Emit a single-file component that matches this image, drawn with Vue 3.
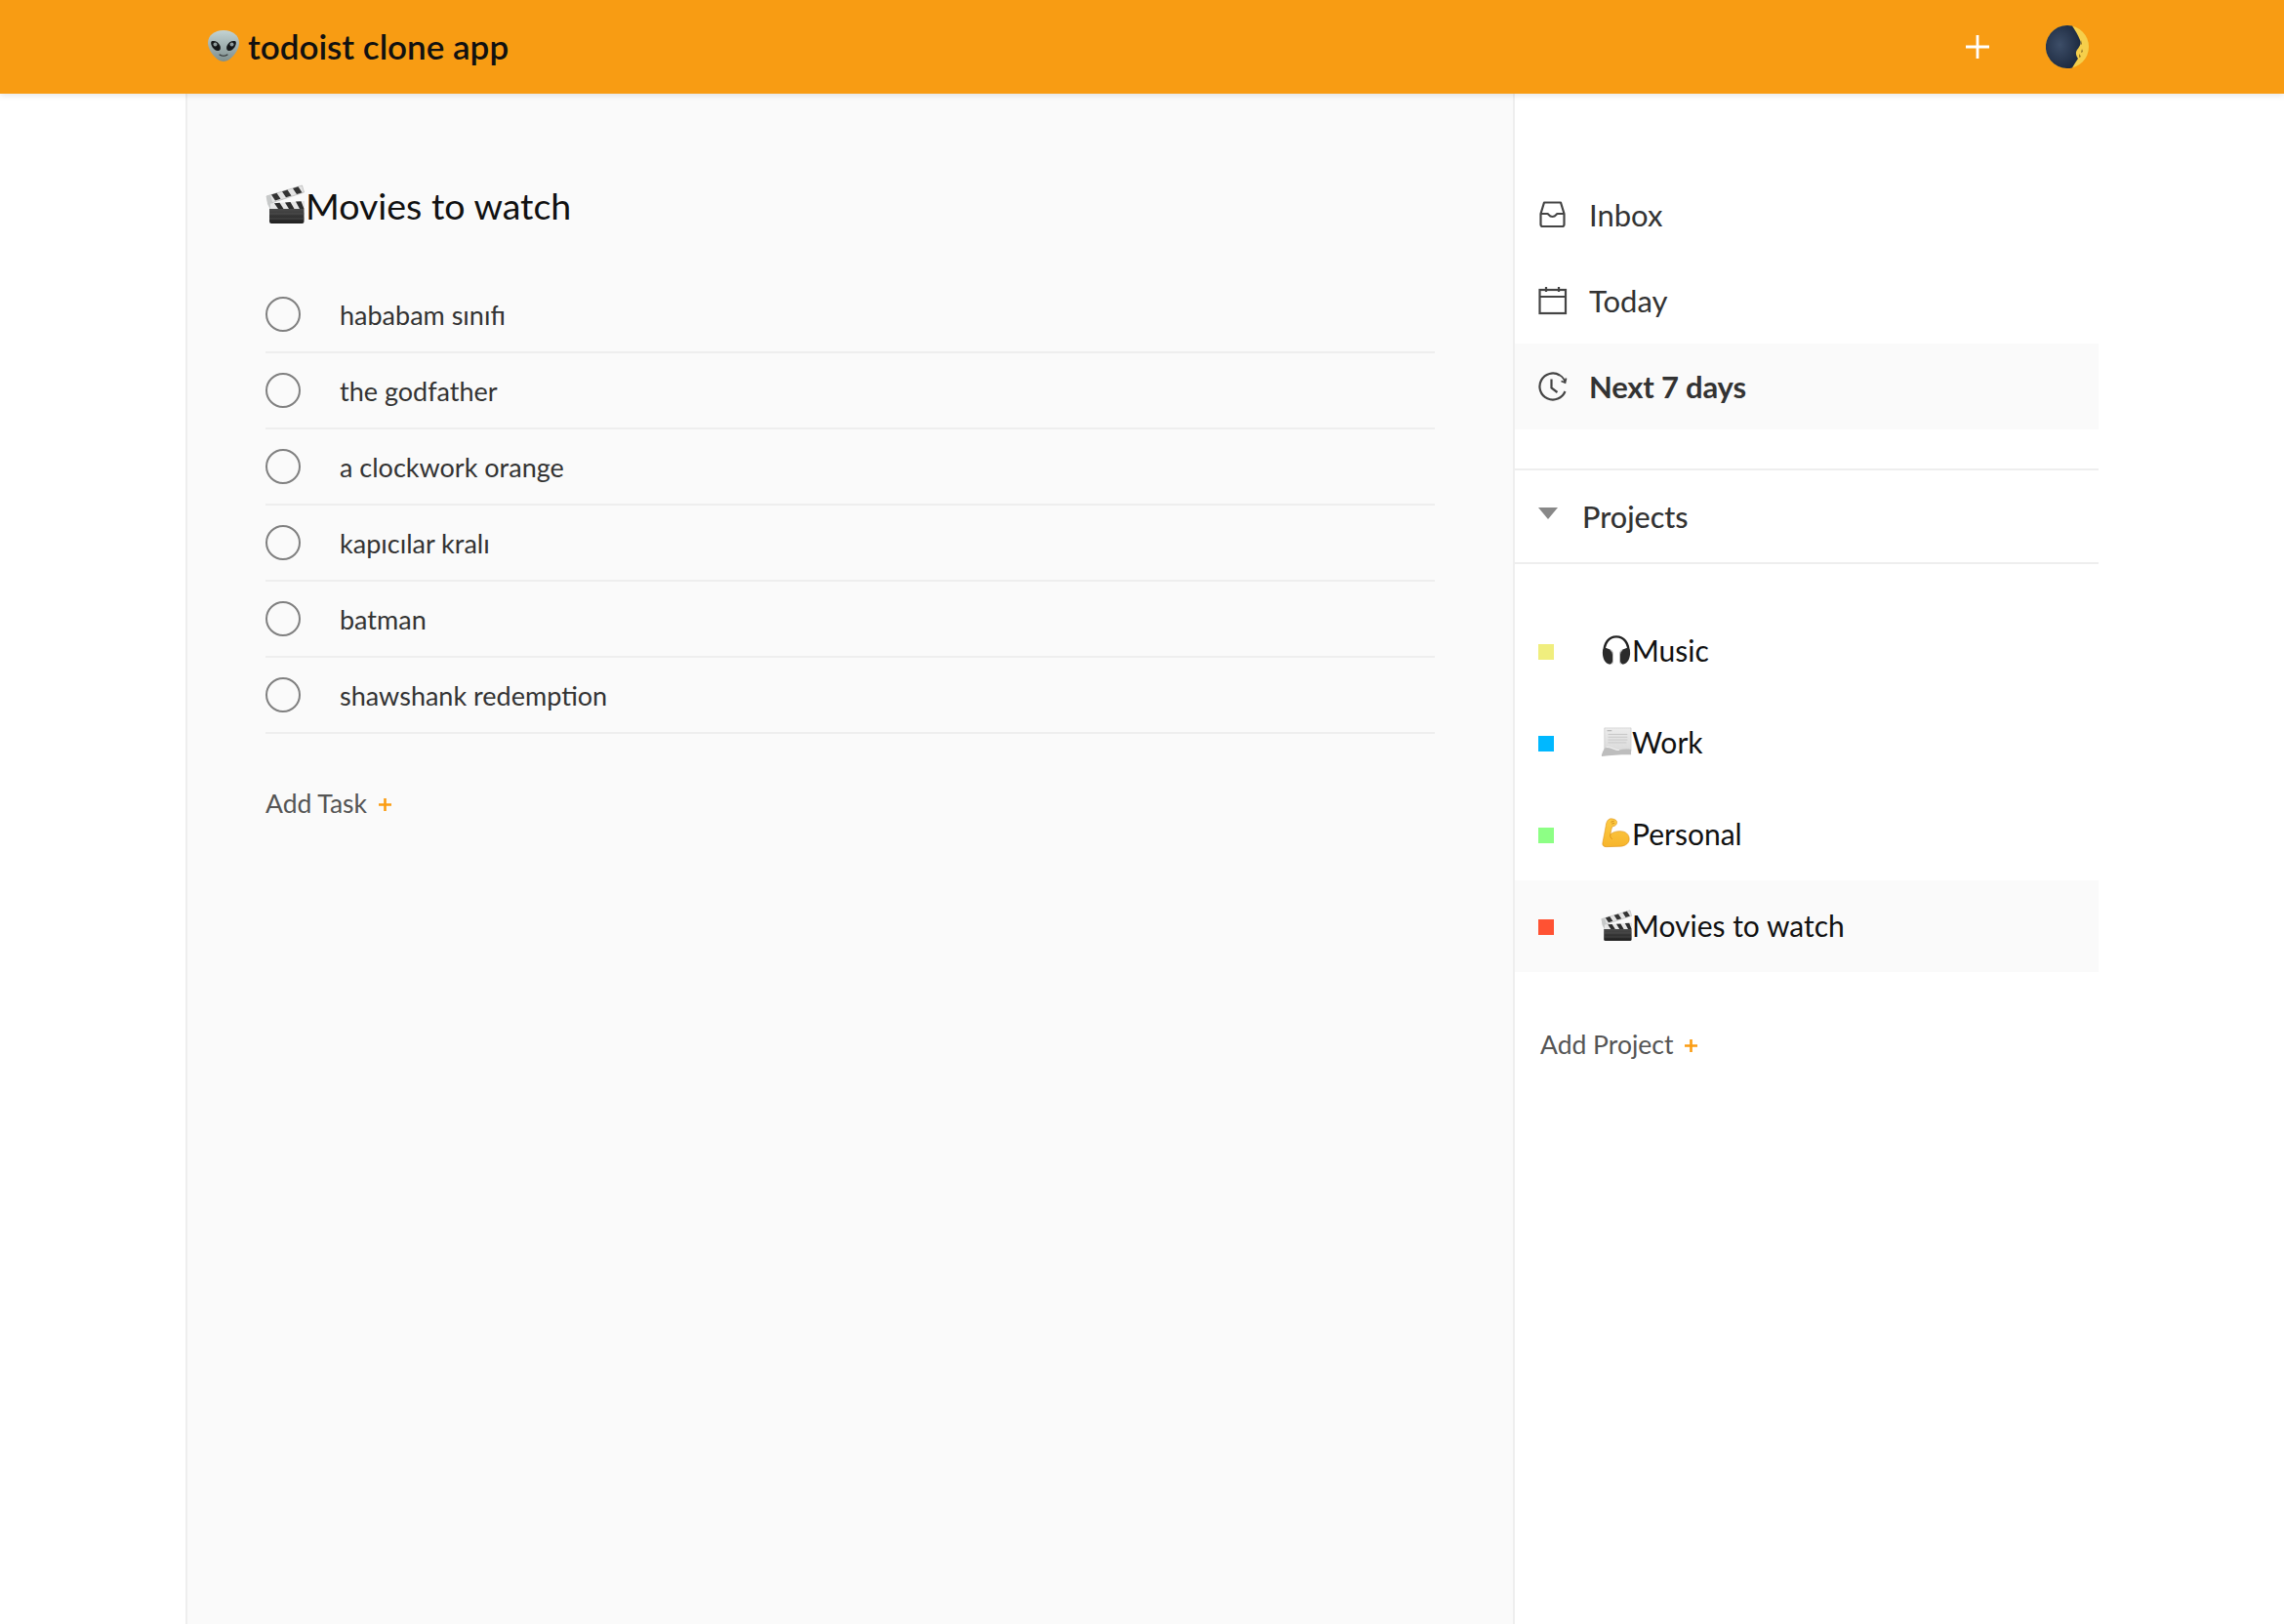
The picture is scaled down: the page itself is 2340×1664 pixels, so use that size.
<template>
  <div class="app">
    <svg class="sprites" width="0" height="0" aria-hidden="true">
      <defs>
        <linearGradient id="board" x1="0" y1="0" x2="0" y2="1">
          <stop offset="0" stop-color="#4a4a4a" />
          <stop offset="1" stop-color="#1f1f1f" />
        </linearGradient>
        <linearGradient id="alienSkin" x1="0" y1="0" x2="0" y2="1">
          <stop offset="0" stop-color="#c3d3d3" />
          <stop offset="1" stop-color="#7f8f8e" />
        </linearGradient>
        <linearGradient id="arm" x1="0" y1="0" x2="0" y2="1">
          <stop offset="0" stop-color="#fdcb45" />
          <stop offset="1" stop-color="#f7b52c" />
        </linearGradient>
        <linearGradient id="paper" x1="0" y1="0" x2="0" y2="1">
          <stop offset="0" stop-color="#ececec" />
          <stop offset="1" stop-color="#d8d8d8" />
        </linearGradient>
        <radialGradient id="moonDark" cx="0.4" cy="0.45" r="0.6">
          <stop offset="0" stop-color="#3d4e68" />
          <stop offset="1" stop-color="#1d2a40" />
        </radialGradient>
      </defs>
      <symbol id="e-clapper" viewBox="0 0 40 40">
        <path d="M1 12 37.500 1l2 7L3 20z" fill="#e4e4e4" stroke="#9a9a9a" stroke-width=".5" />
        <path d="M6 10.500l5.500-1.700 4 6-5.500 1.700zM17 7.200l5.500-1.700 4 6-5.500 1.700zM28 3.900l5.500-1.700 4 6-5.500 1.700z" fill="#333" />
        <path d="M1 12l4-1 4 13-4 2-3-6z" fill="#c7c9c9" />
        <path d="M5 19.500 40 17v8H5z" fill="#e6e6e6" />
        <path d="M9 19.200l5.500-.4 4 6.200H13zM20 18.400l5.500-.4 4 7H24zM31 17.600l5.500-.4 3 7.800H35z" fill="#2c2c2c" />
        <path d="M4 25h35.500v13a2 2 0 0 1-2 2H6a2 2 0 0 1-2-2z" fill="url(#board)" />
        <path d="M4 30h35.500M4 35h35.500" stroke="#5a5a5a" stroke-width=".7" />
      </symbol>
      <symbol id="e-phones" viewBox="0 0 34 34">
        <path d="M3.500 21C3.500 9 9 2.500 17 2.500S30.500 9 30.500 21" fill="none" stroke="#222" stroke-width="2.600" />
        <path d="M2 20c0-4 2-6 4-5l4 1.500c2 .8 3 2.500 3 5v7c0 3-2 4.500-4 4-4-.8-7-6-7-12.500z" fill="#2b2b2b" />
        <path d="M32 20c0-4-2-6-4-5l-4 1.500c-2 .8-3 2.500-3 5v7c0 3 2 4.500 4 4 4-.8 7-6 7-12.500z" fill="#2b2b2b" />
        <path d="M10.500 17c2 1 2.800 3 2.800 5v7c0 1.500-.6 2.500-1.500 3.200M23.500 17c-2 1-2.800 3-2.800 5v7c0 1.500.6 2.500 1.500 3.200" fill="none" stroke="#bdbdbd" stroke-width="1.100" />
      </symbol>
      <symbol id="e-scroll" viewBox="0 0 34 34">
        <path d="M4 2h29v25c-9 0-20 1-29 3z" fill="url(#paper)" stroke="#c4c4c4" stroke-width=".6" />
        <path d="M8 9h21M8 12h21M8 15h21M8 18h20" stroke="#c6c6c6" stroke-width="1" />
        <path d="M7 5h5" stroke="#aaa" stroke-width="1" />
        <path d="M1 31c1-2 2-7 5-8 6-1 10 4 14 3 4-.8 8-1.500 13-.5v5.500c-10-.2-21 .500-32 2z" fill="#bdbdbd" />
        <path d="M6 23c6-1 10 4 14 3" fill="none" stroke="#f2f2f2" stroke-width="1.200" />
      </symbol>
      <symbol id="e-arm" viewBox="0 0 34 34">
        <path d="M10 1C13 .5 17 2 17.500 4 18 7 16 9 12.500 9.500 11.500 12 11 15 10.500 18 13 15.500 17 14.500 21 14.500 27 14.500 31 18 31 23 31 27.500 27 30.500 22 31L6 31.500C3.500 31.500 1.500 30 2 27.500 3 22 4.500 15 5.500 9 6 5 7 2 10 1z" fill="url(#arm)" stroke="#d98b10" stroke-width=".6" />
        <path d="M10.500 18c-.7 2 .2 4 2 5" fill="none" stroke="#d98b10" stroke-width=".9" />
        <path d="M11 4.500l3.500-1M12 6.500l3-.8" stroke="#c67c0d" stroke-width=".8" />
      </symbol>
    </svg>

    <header class="topbar">
      <div class="topbar-inner">
        <div class="logo">
          <svg class="alien" viewBox="0 0 34 34">
            <path d="M17 1C7.500 1 1 6.500 1 14c0 8 9 19 16 19s16-11 16-19C33 6.500 26.500 1 17 1z" fill="url(#alienSkin)" />
            <path d="M4.500 12.500c3-1.500 7.500 .5 9 4.500 1 3 0 5-2.500 5-4 0-8-6.500-6.500-9.500z" fill="#15181a" />
            <path d="M29.500 12.500c-3-1.500-7.500 .5-9 4.500-1 3 0 5 2.500 5 4 0 8-6.500 6.500-9.500z" fill="#15181a" />
            <circle cx="8.500" cy="15.500" r="2" fill="#8d9a9b" />
            <circle cx="25.500" cy="15.500" r="2" fill="#8d9a9b" />
            <path d="M13 26c2.500 1.600 5.500 1.600 8 0" fill="none" stroke="#2b2f30" stroke-width="1.100" stroke-linecap="round" />
          </svg>
          <span class="logo-text">todoist clone app</span>
        </div>
        <div class="actions">
          <svg class="add-icon" viewBox="0 0 24 24">
            <path d="M12 0v24M0 12h24" stroke="#fff" stroke-width="2.800" />
          </svg>
          <svg class="moon" viewBox="0 0 44 44">
            <circle cx="22" cy="22" r="22" fill="#f6cf4b" />
            <path d="M27 .6A22 22 0 1 0 27 43.400C29 40 31 37 33 34 31 31 30 28 32 25 34 22 37 19 35 15 33 10 30 5 27 .6z" fill="url(#moonDark)" />
            <path d="M36 15l1 4-1 1zM37 24l1 3-2 1zM34 29l2 3-2 1z" fill="#8f7226" />
          </svg>
        </div>
      </div>
    </header>

    <div class="content">
      <main class="tasks">
        <h1 class="title">
          <svg class="title-emoji"><use href="#e-clapper" /></svg>Movies to watch
        </h1>
        <ul class="task-list">
          <li v-for="task in tasks" :key="task" class="task">
            <span class="check"></span>
            <span>{{ task }}</span>
          </li>
        </ul>
        <div class="add-row add-task">
          Add Task
          <svg class="plus" viewBox="0 0 13 13"><path d="M6.500 0v13M0 6.500h13" stroke="#fb9d13" stroke-width="2.600" /></svg>
        </div>
      </main>

      <aside class="sidebar">
        <ul class="nav">
          <li class="nav-item">
            <svg class="nav-icon" viewBox="0 0 30 30" fill="none" stroke="#444" stroke-width="2.200">
              <path d="M2.500 14 6 2.500h17L26.500 14v11a2 2 0 0 1-2 2h-20a2 2 0 0 1-2-2z" stroke-linejoin="round" />
              <path d="M2.500 14h7c1 0 1.500 3 5 3s4-3 5-3h7" />
            </svg>
            <span>Inbox</span>
          </li>
          <li class="nav-item">
            <svg class="nav-icon" viewBox="0 0 30 30" fill="none" stroke="#444" stroke-width="2.200">
              <rect x="1.500" y="4" width="26.500" height="24" />
              <path d="M1.500 11h26.500M8 1v5M21 1v5" />
            </svg>
            <span>Today</span>
          </li>
          <li class="nav-item active">
            <svg class="nav-icon" viewBox="0 0 30 30" fill="none" stroke="#444" stroke-width="2.200">
              <path d="M27.500 20A13.500 13.500 0 1 1 22 3.500" />
              <path d="M22 3.500c3 1.500 4.500 4 5.500 7M28.500 6.500l-1 4.500-4-1.500" stroke-width="1.800" />
              <path d="M13.500 7.500v9l6 4.500" />
            </svg>
            <span>Next 7 days</span>
          </li>
        </ul>

        <div class="projects-head">
          <span class="caret"></span>
          <span>Projects</span>
        </div>

        <ul class="projects">
          <li
            v-for="project in projects"
            :key="project.name"
            class="project"
            :class="{ active: project.active }"
          >
            <span class="dot" :style="{ background: project.color }"></span>
            <svg class="project-emoji"><use :href="project.icon" /></svg>
            <span class="project-name">{{ project.name }}</span>
          </li>
        </ul>

        <div class="add-row add-project">
          Add Project
          <svg class="plus" viewBox="0 0 13 13"><path d="M6.500 0v13M0 6.500h13" stroke="#fb9d13" stroke-width="2.600" /></svg>
        </div>
      </aside>
    </div>
  </div>
</template>

<script setup>
const tasks = [
  'hababam sınıfı',
  'the godfather',
  'a clockwork orange',
  'kapıcılar kralı',
  'batman',
  'shawshank redemption'
]

const projects = [
  { name: 'Music', color: '#f0ee7e', icon: '#e-phones' },
  { name: 'Work', color: '#00b8ff', icon: '#e-scroll' },
  { name: 'Personal', color: '#8dff85', icon: '#e-arm' },
  { name: 'Movies to watch', color: '#ff5233', icon: '#e-clapper', active: true }
]
</script>

<style>
html, body { margin: 0; background: #fff; }
</style>

<style scoped>
.app {
  font-family: Lato, "Noto Sans", sans-serif;
  color: #333;
  min-height: 100vh;
  display: flex;
  flex-direction: column;
}

.sprites { position: absolute; }

.topbar {
  height: 96px;
  background: #f89c13;
  box-shadow: 0 2px 6px rgba(0, 0, 0, 0.1);
  position: relative;
  z-index: 2;
}

.topbar-inner {
  width: 1960px;
  height: 100%;
  margin: 0 auto;
  display: flex;
  align-items: center;
  justify-content: space-between;
}

.logo {
  display: flex;
  align-items: center;
  margin-left: 22px;
  gap: 8px;
  font-size: 35px;
  font-weight: 600;
  color: #111;
}

.logo-text { margin-top: -2px; }

.alien { width: 34px; height: 34px; margin-top: -2px; }

.actions {
  display: flex;
  align-items: center;
  gap: 58px;
  margin-right: 10px;
}

.add-icon { width: 24px; height: 24px; }
.moon { width: 44px; height: 44px; }

.content {
  flex: 1;
  width: 1960px;
  margin: 0 auto;
  display: flex;
}

.tasks {
  width: 1360px;
  box-sizing: border-box;
  border-left: 2px solid #eee;
  background: #fafafa;
  padding: 87px 80px 0;
}

.title {
  margin: 0 0 46px;
  font-size: 37.5px;
  font-weight: 400;
  line-height: 55px;
  color: #111;
  display: flex;
  align-items: center;
}

.title-emoji { width: 40px; height: 40px; margin-top: -4px; flex: none; margin-right: 1px; }

.task-list, .nav, .projects {
  list-style: none;
  margin: 0;
  padding: 0;
}

.task {
  height: 78px;
  box-sizing: border-box;
  border-bottom: 2px solid #eee;
  display: flex;
  align-items: center;
  gap: 40px;
  font-size: 27px;
  color: #333;
}

.check {
  width: 36px;
  height: 36px;
  box-sizing: border-box;
  border: 2px solid #808080;
  border-radius: 50%;
}

.add-row {
  display: flex;
  align-items: center;
  gap: 12px;
  font-size: 26.500px;
  color: #555;
}

.add-task { margin-top: 55px; }

.sidebar {
  flex: 1;
  box-sizing: border-box;
  border-left: 2px solid #eee;
  padding-top: 80px;
}

.nav-item {
  height: 88px;
  display: flex;
  align-items: center;
  padding-left: 24px;
  gap: 22px;
  font-size: 31px;
  color: #333;
}

.nav-item.active {
  background: #fafafa;
  font-weight: 700;
  letter-spacing: -0.2px;
}

.nav-icon { width: 30px; height: 30px; flex: none; }

.projects-head {
  margin-top: 40px;
  height: 98px;
  box-sizing: border-box;
  border-top: 2px solid #eee;
  border-bottom: 2px solid #eee;
  display: flex;
  align-items: center;
  padding-left: 24px;
  gap: 25px;
  font-size: 30.500px;
  font-weight: 500;
  color: #333;
}

.caret {
  width: 0;
  height: 0;
  border-left: 10px solid transparent;
  border-right: 10px solid transparent;
  border-top: 12px solid #888;
  margin-top: -6px;
}

.projects { margin-top: 42px; }

.project {
  height: 94px;
  display: flex;
  align-items: center;
  padding-left: 24px;
  font-size: 30px;
  color: #111;
}

.project.active { background: #fafafa; }

.dot { width: 16px; height: 16px; flex: none; margin: 2px 48px 0 0; }

.project-emoji { width: 32px; height: 32px; flex: none; margin-top: -2px; }

.project-name { margin-top: -2px; }

.add-project { margin: 58px 0 0 26px; }

.plus { width: 13px; height: 13px; margin-top: 2px; }
</style>
